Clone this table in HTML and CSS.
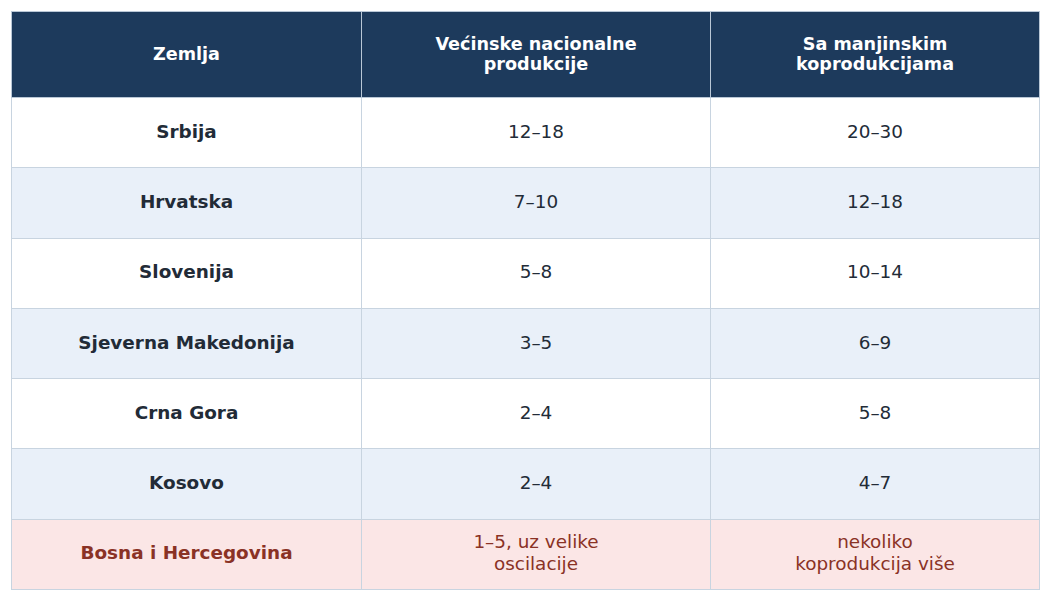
FILE: index.html
```html
<!DOCTYPE html>
<html lang="sr">
<head>
<meta charset="utf-8">
<link rel="stylesheet" href="styles.css">
</head>
<body>
<table class="grid">
  <colgroup>
    <col class="c1"><col class="c2"><col class="c3">
  </colgroup>
  <thead>
    <tr><th>Zemlja</th><th>Većinske nacionalne<br>produkcije</th><th>Sa manjinskim<br>koprodukcijama</th></tr>
  </thead>
  <tbody>
    <tr><td class="name">Srbija</td><td>12–18</td><td>20–30</td></tr>
    <tr class="alt"><td class="name">Hrvatska</td><td>7–10</td><td>12–18</td></tr>
    <tr><td class="name">Slovenija</td><td>5–8</td><td>10–14</td></tr>
    <tr class="alt"><td class="name">Sjeverna Makedonija</td><td>3–5</td><td>6–9</td></tr>
    <tr><td class="name">Crna Gora</td><td>2–4</td><td>5–8</td></tr>
    <tr class="alt"><td class="name">Kosovo</td><td>2–4</td><td>4–7</td></tr>
    <tr class="hl"><td class="name">Bosna i Hercegovina</td><td>1–5, uz velike<br>oscilacije</td><td>nekoliko<br>koprodukcija više</td></tr>
  </tbody>
</table>
</body>
</html>
```
FILE: styles.css
```css
html, body {
  margin: 0;
  padding: 0;
  background: #ffffff;
}
body {
  padding: 11px;
  font-family: "DejaVu Sans", sans-serif;
}
.grid {
  border-collapse: collapse;
  table-layout: fixed;
  width: 1029px;
}
.c1 { width: 350px; }
.c2 { width: 349px; }
.c3 { width: 329px; }
.grid th, .grid td {
  border: 1px solid #c8d4e0;
  text-align: center;
  vertical-align: middle;
  padding: 0 8px 2px;
}
.grid th {
  background: #1d3a5c;
  color: #ffffff;
  font-weight: bold;
  font-size: 17.6px;
  line-height: 20px;
  height: 83px;
  border-color: #b9c7d6;
}
.grid td {
  height: 67.3px;
  font-size: 18.4px;
  line-height: 22px;
  color: #222b37;
  background: #ffffff;
}
.grid td.name {
  font-weight: bold;
}
.grid tr.alt td {
  background: #e9f0f9;
}
.grid tr.hl td {
  background: #fbe6e6;
  color: #8a3225;
}
```
